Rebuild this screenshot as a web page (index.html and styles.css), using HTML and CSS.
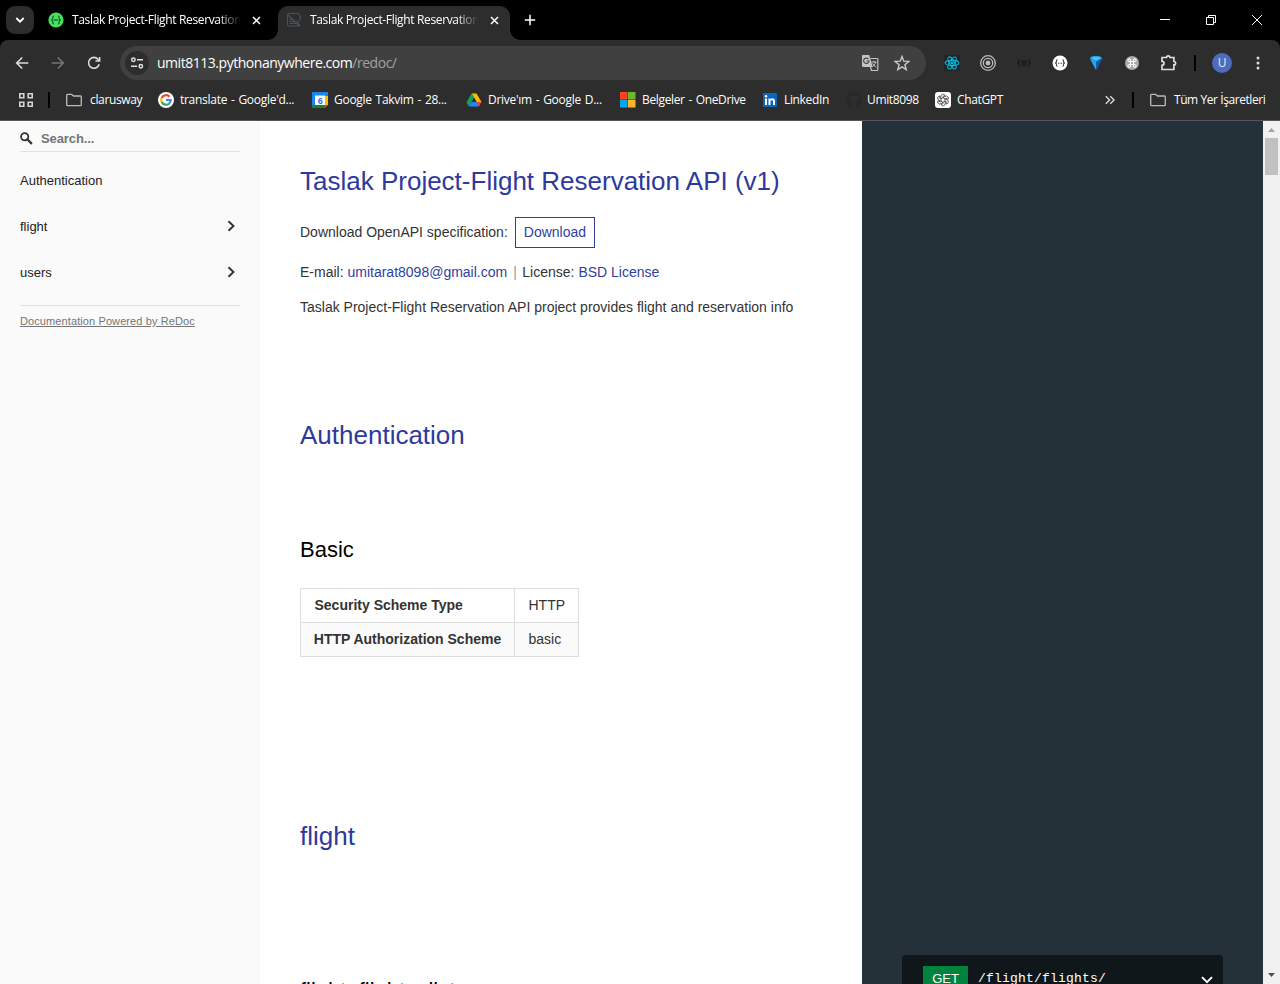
FILE: index.html
```html
<!DOCTYPE html>
<html lang="tr">
<head>
<meta charset="utf-8">
<title>Taslak Project-Flight Reservation API</title>
<link rel="stylesheet" href="styles.css">
</head>
<body>
<div class="browser">
  <div class="tabstrip">
    <div class="tabsearch"><svg width="10" height="10" viewBox="0 0 10 10" fill="none" stroke="#fff" stroke-width="1.8"><path d="M1.3 3l3.7 3.7L8.7 3"/></svg></div>
    <div class="tab">
      <svg class="fav" width="16" height="16" viewBox="0 0 16 16"><circle cx="8" cy="8" r="7.6" fill="#49e15d"/><path d="M6 4.2c-1.7 0-1 1.5-1.2 2.7L3.6 8l1.2 1.1C5 10.300 4.300 11.800 6 11.800M10 4.200c1.700 0 1 1.500 1.200 2.700L12.400 8l-1.200 1.100c-.2 1.200.5 2.700-1.200 2.700M6 8h4" fill="none" stroke="#176b38" stroke-width="1.300"/></svg>
      <span class="tabtitle">Taslak Project-Flight Reservation</span>
      <svg class="close" width="9" height="9" viewBox="0 0 9 9" stroke="#fff" stroke-width="1.500"><path d="M1 1l7 7M8 1l-7 7"/></svg>
    </div>
    <div class="tab active">
      <svg class="fav" width="16" height="16" viewBox="0 0 16 16" fill="none" stroke="#465263" stroke-width="1.100"><path d="M3 1.500h7a4 4 0 0 1 1.200 7.900L14 14M1.500 3v9.500q0 1.500 1.500 1.500h10.500M1.500 3q0-1.500 1.500-1.500M2 3l11.500 11M3.500 7.500h2.500M3.500 9.500h4.500M3.500 11.500h7"/></svg>
      <span class="tabtitle">Taslak Project-Flight Reservation</span>
      <svg class="close" width="9" height="9" viewBox="0 0 9 9" stroke="#fff" stroke-width="1.500"><path d="M1 1l7 7M8 1l-7 7"/></svg>
    </div>
    <svg class="newtab" width="12" height="12" viewBox="0 0 12 12" stroke="#fff" stroke-width="1.500"><path d="M6 .8v10.400M.8 6h10.400"/></svg>
    <div class="winbtns">
      <svg width="10" height="10" viewBox="0 0 10 10" stroke="#fff"><path d="M0 4.500h10"/></svg>
      <svg width="10" height="10" viewBox="0 0 10 10" stroke="#fff" fill="none"><path d="M.5 2.500h7v7h-7zM2.500 2.500v-2h7v7h-2"/></svg>
      <svg width="10" height="10" viewBox="0 0 10 10" stroke="#fff"><path d="M0 0l10 10M10 0L0 10"/></svg>
    </div>
  </div>

  <div class="toolbar">
    <svg class="nav" width="14" height="14" viewBox="0 0 14 14" fill="none" stroke="#dcdcdc" stroke-width="1.600"><path d="M13.300 7H2M7.200 1.500L1.700 7l5.500 5.500"/></svg>
    <svg class="nav" width="14" height="14" viewBox="0 0 14 14" fill="none" stroke="#747474" stroke-width="1.600"><path d="M.7 7H12M6.800 1.500L12.300 7l-5.500 5.500"/></svg>
    <svg class="nav" width="14" height="14" viewBox="0 0 14 14" fill="none" stroke="#dcdcdc" stroke-width="1.600"><path d="M12.200 8.200A5.400 5.400 0 1 1 11 3.200l1.500 1.500M12.600 1v4H8.500"/></svg>
    <div class="omnibox">
      <div class="site"><svg width="14" height="14" viewBox="0 0 14 14" fill="none" stroke="#e2e2e2" stroke-width="1.500"><circle cx="3.400" cy="3.800" r="1.700"/><path d="M7 3.800h6M1 10.200h6"/><circle cx="10.800" cy="10.200" r="1.700"/></svg></div>
      <span class="url">umit8113.pythonanywhere.com<i>/redoc/</i></span>
      <svg class="trans" width="18" height="18" viewBox="0 0 18 18"><path d="M1.500 1h6.700l3.600 12H2.500q-1.500 0-1.500-1.500v-9Q1 1 1.500 1z" fill="#c4c4c4"/><path d="M7.500 5.200A2.700 2.700 0 1 0 8 7H5.500" fill="none" stroke="#444" stroke-width="1.100"/><path d="M9.500 4.500H16q.8 0 .8.800v10.400q0 .8-.8.800h-5.500L9.500 13" fill="none" stroke="#c4c4c4" stroke-width="1.200"/><path d="M10.500 8h5M13 6.800V8M14.500 8c-.3 2-1.500 3.500-3 4.500M11.500 9.500l3.500 4" fill="none" stroke="#c4c4c4"/></svg>
      <svg class="star" width="16" height="16" viewBox="0 0 16 16" fill="none" stroke="#c8c8c8" stroke-width="1.400"><path d="M8 1.500l1.800 4.700 5 .3-3.900 3.200 1.300 4.900L8 11.900l-4.200 2.700 1.300-4.900L1.200 6.500l5-.3z"/></svg>
    </div>
    <div class="exts">
      <svg width="16" height="16" viewBox="0 0 16 16"><path fill="#20252a" d="M0 0h16v16H0z"/><g fill="none" stroke="#08b8d6" stroke-width="1.100"><ellipse cx="8" cy="8" rx="6.800" ry="2.600"/><ellipse cx="8" cy="8" rx="6.800" ry="2.600" transform="rotate(60 8 8)"/><ellipse cx="8" cy="8" rx="6.800" ry="2.600" transform="rotate(120 8 8)"/></g><circle cx="8" cy="8" r="1.500" fill="#08b8d6"/></svg>
      <svg width="16" height="16" viewBox="0 0 16 16" fill="none" stroke="#bcbcbc" stroke-width="1.300"><circle cx="8" cy="8" r="7.300"/><circle cx="8" cy="8" r="4.700"/><circle cx="8" cy="8" r="1.800" fill="#bcbcbc"/></svg>
      <svg width="16" height="16" viewBox="0 0 16 16" fill="none" stroke="#111" stroke-width="1.100"><path d="M4 4.500c-1.700 0-1 1.500-1.200 2.500L1.800 8l1 1c.2 1-.5 2.500 1.200 2.500M12 4.500c1.700 0 1 1.500 1.200 2.500l1 1-1 1c-.2 1 .5 2.500-1.200 2.500M5.500 6h5M5.500 8h5M5.500 10h5"/></svg>
      <svg width="16" height="16" viewBox="0 0 16 16"><circle cx="8" cy="8" r="7.500" fill="#fff"/><path d="M5.500 4.800c-1.500 0-.9 1.500-1.100 2.400L3.500 8l.9.800c.2 1-.4 2.400 1.100 2.400M10.500 4.800c1.500 0 .9 1.500 1.100 2.400l.9.800-.9.800c-.2 1 .4 2.400-1.100 2.400" fill="none" stroke="#444" stroke-width="1.100"/><path d="M6 8.200h1M7.600 8.200h1M9.200 8.200h1" stroke="#444" stroke-width="1.100"/></svg>
      <svg width="16" height="16" viewBox="0 0 16 16"><path d="M2 3.500Q2 .8 8 .8t6 2.700L8.300 15z" fill="#138ce0"/><path d="M2 3.500L8 7v8z" fill="#2fa2ee"/><path d="M8 7l6-3.500L8.300 15z" fill="#0b5aa8"/><path d="M3 3q5-2.800 10 0L8 6z" fill="#4ac0ff"/></svg>
      <svg width="16" height="16" viewBox="0 0 16 16"><circle cx="8" cy="8" r="7" fill="#a9a9a9"/><path d="M6.500 6.500h3v3h-3zM6.500 6.500H5.200a1.300 1.300 0 1 1 1.300-1.300zM9.500 6.500V5.200a1.300 1.300 0 1 1 1.300 1.300zM6.500 9.500v1.300a1.300 1.300 0 1 1-1.300-1.300zM9.500 9.500h1.300a1.300 1.300 0 1 1-1.300 1.300z" fill="none" stroke="#f8f8f8" stroke-width="1.100"/></svg>
      <svg width="18" height="18" viewBox="0 0 18 18" fill="none" stroke="#dedede" stroke-width="1.700"><path d="M2 3.500h4.500a1.700 1.700 0 0 1 3.400 0h4v4a1.700 1.700 0 0 1 0 3.400v4.600H2v-4.200a2 2 0 0 0 0-4z"/></svg>
    </div>
    <span class="sep"></span>
    <span class="avatar">U</span>
    <svg class="dots" width="4" height="14" viewBox="0 0 4 14" fill="#ddd"><circle cx="2" cy="2" r="1.500"/><circle cx="2" cy="7" r="1.500"/><circle cx="2" cy="12" r="1.500"/></svg>
  </div>

  <div class="bookmarks">
    <svg class="apps" width="14" height="14" viewBox="0 0 14 14" fill="none" stroke="#d4d4d4" stroke-width="1.600"><path d="M.8.8h4v4h-4zM9.200.8h4v4h-4zM.8 9.200h4v4h-4zM9.200 9.200h4v4h-4z"/></svg>
    <span class="sep"></span>
    <div class="bm b1"><svg width="16" height="16" viewBox="0 0 16 16" fill="none" stroke="#bcbcbc" stroke-width="1.300"><path d="M.7 3.200q0-.9.900-.9h4L7.500 4h7q.8 0 .8.900v7.900q0 .9-.8.900H1.600q-.9 0-.9-.9z"/></svg><span>clarusway</span></div>
    <div class="bm b2"><svg width="16" height="16" viewBox="0 0 16 16"><circle cx="8" cy="8" r="8" fill="#fff"/><g fill="none" stroke-width="2.200"><path d="M11.500 4.700A4.800 4.800 0 0 0 3.700 5.900" stroke="#ea4335"/><path d="M3.700 5.900a4.800 4.800 0 0 0 0 4.200" stroke="#fbbc05"/><path d="M3.700 10.100a4.800 4.800 0 0 0 7.500 1.400" stroke="#34a853"/><path d="M11.200 11.500A4.800 4.800 0 0 0 12.700 8H8" stroke="#4285f4"/></g></svg><span>translate - Google'd...</span></div>
    <div class="bm b3"><svg width="16" height="16" viewBox="0 0 16 16"><path fill="#1a84f0" d="M0 0h16v4H3v9H0z"/><path fill="#fff" d="M3 3.500h10v9.500H3z"/><path fill="#fbbc04" d="M13 4h3v9h-3z"/><path fill="#188038" d="M0 13h13v3H0z"/><path fill="#ea4335" d="M13 13h3l-3 3z"/><text x="8" y="11.500" text-anchor="middle" class="calnum">6</text></svg><span>Google Takvim - 28...</span></div>
    <div class="bm b4"><svg width="16" height="16" viewBox="0 0 16 16"><path fill="#12a15b" d="M5.400 1.500H8L9.500 4 4 13 2.700 14.500.5 10.500z"/><path fill="#ffba00" d="M6 1.500h4.500l5 8.500h-5z"/><path fill="#2684fc" d="M3 14.500L5.500 10h7L13 14.500z"/><path fill="#ea4335" d="M10.500 10h5L13 14.500z"/><path fill="#2d2d2d" d="M8 5.700l2.500 4.300h-5z"/></svg><span>Drive'ım - Google D...</span></div>
    <div class="bm b5"><svg width="16" height="16" viewBox="0 0 16 16"><path fill="#f8461f" d="M0 0h7.500v7.500H0z"/><path fill="#70b62c" d="M8 0h7.500v7.500H8z"/><path fill="#05a6f0" d="M0 8h7.500v7.500H0z"/><path fill="#ffb52e" d="M8 8h7.500v7.500H8z"/></svg><span>Belgeler - OneDrive</span></div>
    <div class="bm b6"><svg width="16" height="16" viewBox="0 0 16 16"><rect x="1" y="1" width="14" height="14" rx="1" fill="#0a66c2"/><path d="M3 6.500h2V13H3zM6.500 6.500h2v.9c1.200-1.800 4.500-1.300 4.500 1.700V13h-2V9.500c0-1.900-2.500-1.700-2.500 0V13h-2z" fill="#fff"/><circle cx="4" cy="4.300" r="1.200" fill="#fff"/></svg><span>LinkedIn</span></div>
    <div class="bm b7"><svg width="16" height="16" viewBox="0 0 16 16"><path fill="#24292e" d="M8 .3a7.700 7.700 0 0 0-2.500 15c.5 0 .6-.2.600-.5v-1.500c-2.100.5-2.700-.9-2.900-1.600-.5-1-1.500-1.200-.6-1.300 1 0 1.500 1.500 2.100 1.700.6.200 1.200 0 1.500-.2.100-.4.200-.8.500-1-1.700-.2-3.500-.9-3.500-3.800 0-.8.300-1.500.8-2.100-.1-.2-.3-1 .1-2.100 0 0 .6-.2 2.100.8q1.900-.5 3.800 0c1.500-1 2.100-.8 2.100-.8.400 1.100.2 1.900.1 2.100.5.600.8 1.300.8 2.100 0 2.900-1.800 3.600-3.500 3.800.3.200.6.700.6 1.400v2.200c0 .3.100.6.500.5A7.700 7.700 0 0 0 8 .3z"/></svg><span>Umit8098</span></div>
    <div class="bm b8"><svg width="16" height="16" viewBox="0 0 16 16"><rect width="16" height="16" rx="3" fill="#fff"/><g fill="none" stroke="#333" stroke-width=".75"><path id="petal" d="M8 5.700L5.800 7V4.400a2.200 2.200 0 0 1 4.100-1.100L7.500 4.700"/><use href="#petal" transform="rotate(60 8 8)"/><use href="#petal" transform="rotate(120 8 8)"/><use href="#petal" transform="rotate(180 8 8)"/><use href="#petal" transform="rotate(240 8 8)"/><use href="#petal" transform="rotate(300 8 8)"/></g></svg><span>ChatGPT</span></div>
    <svg class="more" width="10" height="10" viewBox="0 0 10 10" fill="none" stroke="#dedede" stroke-width="1.400"><path d="M.8 1.200L4.600 5 .8 8.800M5.300 1.200L9.100 5 5.300 8.800"/></svg>
    <span class="sep"></span>
    <div class="bm b9"><svg width="16" height="16" viewBox="0 0 16 16" fill="none" stroke="#bcbcbc" stroke-width="1.300"><path d="M.7 3.200q0-.9.900-.9h4L7.500 4h7q.8 0 .8.900v7.900q0 .9-.8.900H1.600q-.9 0-.9-.9z"/></svg><span>Tüm Yer İşaretleri</span></div>
  </div>

  <div class="page">
    <nav class="sidebar">
      <div class="search"><svg width="13" height="13" viewBox="0 0 13 13" fill="none" stroke="#333"><circle cx="4.700" cy="4.700" r="3.600" stroke-width="1.800"/><path d="M7.500 7.500l4.400 4.400" stroke-width="2.200"/></svg><span>Search...</span></div>
      <a class="item">Authentication</a>
      <a class="item">flight<svg width="8" height="12" viewBox="0 0 8 12" fill="none" stroke="#333" stroke-width="1.900"><path d="M1.500 1.200L6.500 6l-5 4.800"/></svg></a>
      <a class="item">users<svg width="8" height="12" viewBox="0 0 8 12" fill="none" stroke="#333" stroke-width="1.900"><path d="M1.500 1.200L6.500 6l-5 4.800"/></svg></a>
      <div class="powered"><a>Documentation Powered by ReDoc</a></div>
    </nav>
    <main class="content">
      <h1>Taslak Project-Flight Reservation API (v1)</h1>
      <div class="dl"><span>Download OpenAPI specification:</span><a class="btn">Download</a></div>
      <p class="meta">E-mail: <a>umitarat8098@gmail.com</a><span class="bar">|</span>License: <a>BSD License</a></p>
      <p class="desc">Taslak Project-Flight Reservation API project provides flight and reservation info</p>
      <h1 class="auth">Authentication</h1>
      <h2>Basic</h2>
      <table>
        <tr><th>Security Scheme Type</th><td>HTTP</td></tr>
        <tr><th>HTTP Authorization Scheme</th><td>basic</td></tr>
      </table>
      <h1 class="flight">flight</h1>
      <h2 class="op">flight_flights_list</h2>
    </main>
    <aside class="samples">
      <div class="endpoint"><span class="verb">GET</span><span class="path">/flight/flights/</span><svg width="12" height="8" viewBox="0 0 12 8" fill="none" stroke="#fff" stroke-width="1.900"><path d="M1 1.200l5 5 5-5"/></svg></div>
    </aside>
    <div class="scroll">
      <svg width="7" height="4" viewBox="0 0 7 4"><path fill="#a3a3a3" d="M0 4l3.500-4L7 4z"/></svg>
      <div class="thumb"></div>
      <svg class="down" width="7" height="4" viewBox="0 0 7 4"><path fill="#505050" d="M0 0l3.500 4L7 0z"/></svg>
    </div>
  </div>
</div>
</body>
</html>
```
FILE: styles.css
```css
* { box-sizing: border-box; }
body { margin: 0; font-family: "Liberation Sans", Arial, sans-serif; }
svg { display: block; flex: none; }
h1, h2, p { margin: 0; font-weight: 400; }
.browser { width: 1280px; height: 984px; overflow: hidden; display: flex; flex-direction: column; background: #000; }

.tabstrip, .toolbar, .bookmarks { font-family: "Open Sans", "Noto Sans", sans-serif; font-size: 12px; letter-spacing: -0.35px; color: #fff; white-space: nowrap; display: flex; align-items: center; flex: none; }
.tabstrip { height: 40px; padding-left: 6px; background: #000; }
.tabsearch { width: 28px; height: 28px; border-radius: 9px; background: #2d2d2d; display: flex; align-items: center; justify-content: center; }
.tab { width: 232px; height: 34px; margin-top: 6px; padding: 0 11px 6px 8px; display: flex; align-items: center; }
.tabsearch + .tab { margin-left: 6px; }
.tab + .tab { margin-left: 6px; }
.tab.active { position: relative; background: #2d2d2d; border-radius: 10px 10px 0 0; }
.tab.active::before, .tab.active::after { content: ""; position: absolute; bottom: 0; width: 10px; height: 10px; }
.tab.active::before { left: -10px; background: radial-gradient(circle at 0 0, #000 9.5px, #2d2d2d 10px); }
.tab.active::after { right: -10px; background: radial-gradient(circle at 100% 0, #000 9.5px, #2d2d2d 10px); }
.tabtitle { width: 168px; margin-left: 8px; overflow: hidden; line-height: 18px; mask-image: linear-gradient(90deg, #000 146px, transparent 169px); }
.close { margin-left: auto; }
.newtab { margin-left: 14px; }
.winbtns { margin-left: auto; padding-right: 18px; display: flex; gap: 36px; }

.toolbar { height: 46px; padding-left: 15px; background: #2d2d2d; border-radius: 8px 8px 0 0; }
.nav { margin-right: 22px; }
.omnibox { width: 806px; height: 34px; margin-left: -3px; padding: 0 16px 0 5px; border-radius: 17px; background: #404040; display: flex; align-items: center; }
.site { width: 24px; height: 24px; border-radius: 12px; background: #2d2d2d; display: flex; align-items: center; justify-content: center; }
.url { margin-left: 8px; font-size: 14px; letter-spacing: -0.47px; line-height: 20px; }
.url i { font-style: normal; color: #a2a2a2; }
.trans { margin-left: auto; margin-right: 15px; }
.exts { width: 234px; margin-left: 18px; display: flex; gap: 20px; align-items: center; }
.sep { width: 2px; height: 16px; background: #000; flex: none; }
.toolbar .sep { margin-left: 16px; }
.avatar { width: 20px; height: 20px; margin-left: 16px; border-radius: 50%; background: #4e6bbd; color: #e8ecf8; line-height: 20px; text-align: center; flex: none; }
.dots { margin-left: 24px; }

.bookmarks { height: 35px; padding: 0 0 6px 19px; background: #2d2d2d; border-bottom: 1px solid #565656; }
.bookmarks .sep { margin-left: 15px; }
.bm { display: flex; align-items: center; flex: none; line-height: 16px; }
.b1 { margin-left: 16px; width: 92px; gap: 8px; }
.b2, .b3, .b4 { width: 154px; gap: 6px; letter-spacing: -0.28px; word-spacing: 1px; }
.b5 { width: 142px; gap: 6px; word-spacing: 1px; }
.b6 { width: 84px; gap: 6px; }
.b7 { width: 89px; gap: 5px; }
.b8 { width: 170px; gap: 6px; }
.bookmarks .more + .sep { margin-left: 17px; }
.b9 { margin-left: 16px; gap: 8px; letter-spacing: -0.43px; }
.calnum { font: bold 9px "Liberation Sans", Arial, sans-serif; fill: #1a73e8; }

.page { height: 863px; display: flex; background: #fff; }
.sidebar { width: 260px; padding: 0 20px; background: #fafafa; font-size: 13px; color: #333; flex: none; }
.search { height: 31px; padding-top: 4px; border-bottom: 1px solid #e1e1e1; display: flex; align-items: center; gap: 8px; font-weight: 700; letter-spacing: -0.1px; color: #757575; margin-bottom: 6px; }
.item { height: 46px; padding: 0 5px 2px 0; display: flex; align-items: center; justify-content: space-between; color: #222; }
.powered { margin-top: 9px; padding-top: 8px; border-top: 1px solid #e1e1e1; font-size: 11px; line-height: 14px; letter-spacing: 0.1px; }
.powered a { color: #757575; text-decoration: underline; }

.content { width: 602px; padding: 40px 0 0 40px; font-size: 14px; color: #333; flex: none; overflow: hidden; white-space: nowrap; }
.content h1 { font-size: 26px; line-height: 40px; color: #2d3a9c; }
.content h2 { font-size: 22px; line-height: 40px; margin-top: 75px; color: #000; }
.content a { color: #303f9f; }
.dl { height: 31px; margin-top: 16px; display: flex; align-items: center; gap: 7px; }
.dl span { padding-bottom: 2px; }
.btn { height: 31px; padding: 0 8px; border: 1px solid #303f9f; line-height: 29px; }
.meta { margin-top: 12px; line-height: 24px; }
.bar { color: #999; margin: 0 5.5px 0 6px; }
.desc { margin-top: 11px; line-height: 24px; }
.content .auth { margin-top: 96px; }
table { margin-top: 18px; width: 279px; border-collapse: collapse; }
th, td { height: 34px; padding: 0 0 2px; border: 1px solid #ddd; line-height: 20px; text-align: center; }
th { width: 214px; }
td { padding-left: 13.5px; text-align: left; }
tr:first-child th { text-align: left; padding-left: 13.5px; }
tr:nth-child(2) { background: #fafafa; }
.content .flight { margin-top: 159px; }
.content .op { margin-top: 115px; }

.samples { width: 401px; background: #243138; display: flex; align-items: flex-end; padding-left: 40px; overflow: hidden; flex: none; }
.endpoint { width: 321px; height: 47px; margin-bottom: -18px; padding: 11px 10px 0 21px; border-radius: 4px 4px 0 0; background: #10171a; color: #fff; display: flex; align-items: flex-start; flex: none; }
.verb { width: 45px; height: 26px; background: #00843d; font-size: 13px; line-height: 26px; text-align: center; }
.path { margin-left: 10px; font: 13px/26px "Liberation Mono", "Courier New", monospace; letter-spacing: 0.2px; }
.endpoint svg { margin: 10px 0 0 auto; }
.scroll { width: 17px; background: #f1f1f1; display: flex; flex-direction: column; align-items: center; padding: 7px 0; }
.thumb { width: 13px; height: 37px; margin-top: 6px; background: #c1c1c1; }
.down { margin-top: auto; }
```
